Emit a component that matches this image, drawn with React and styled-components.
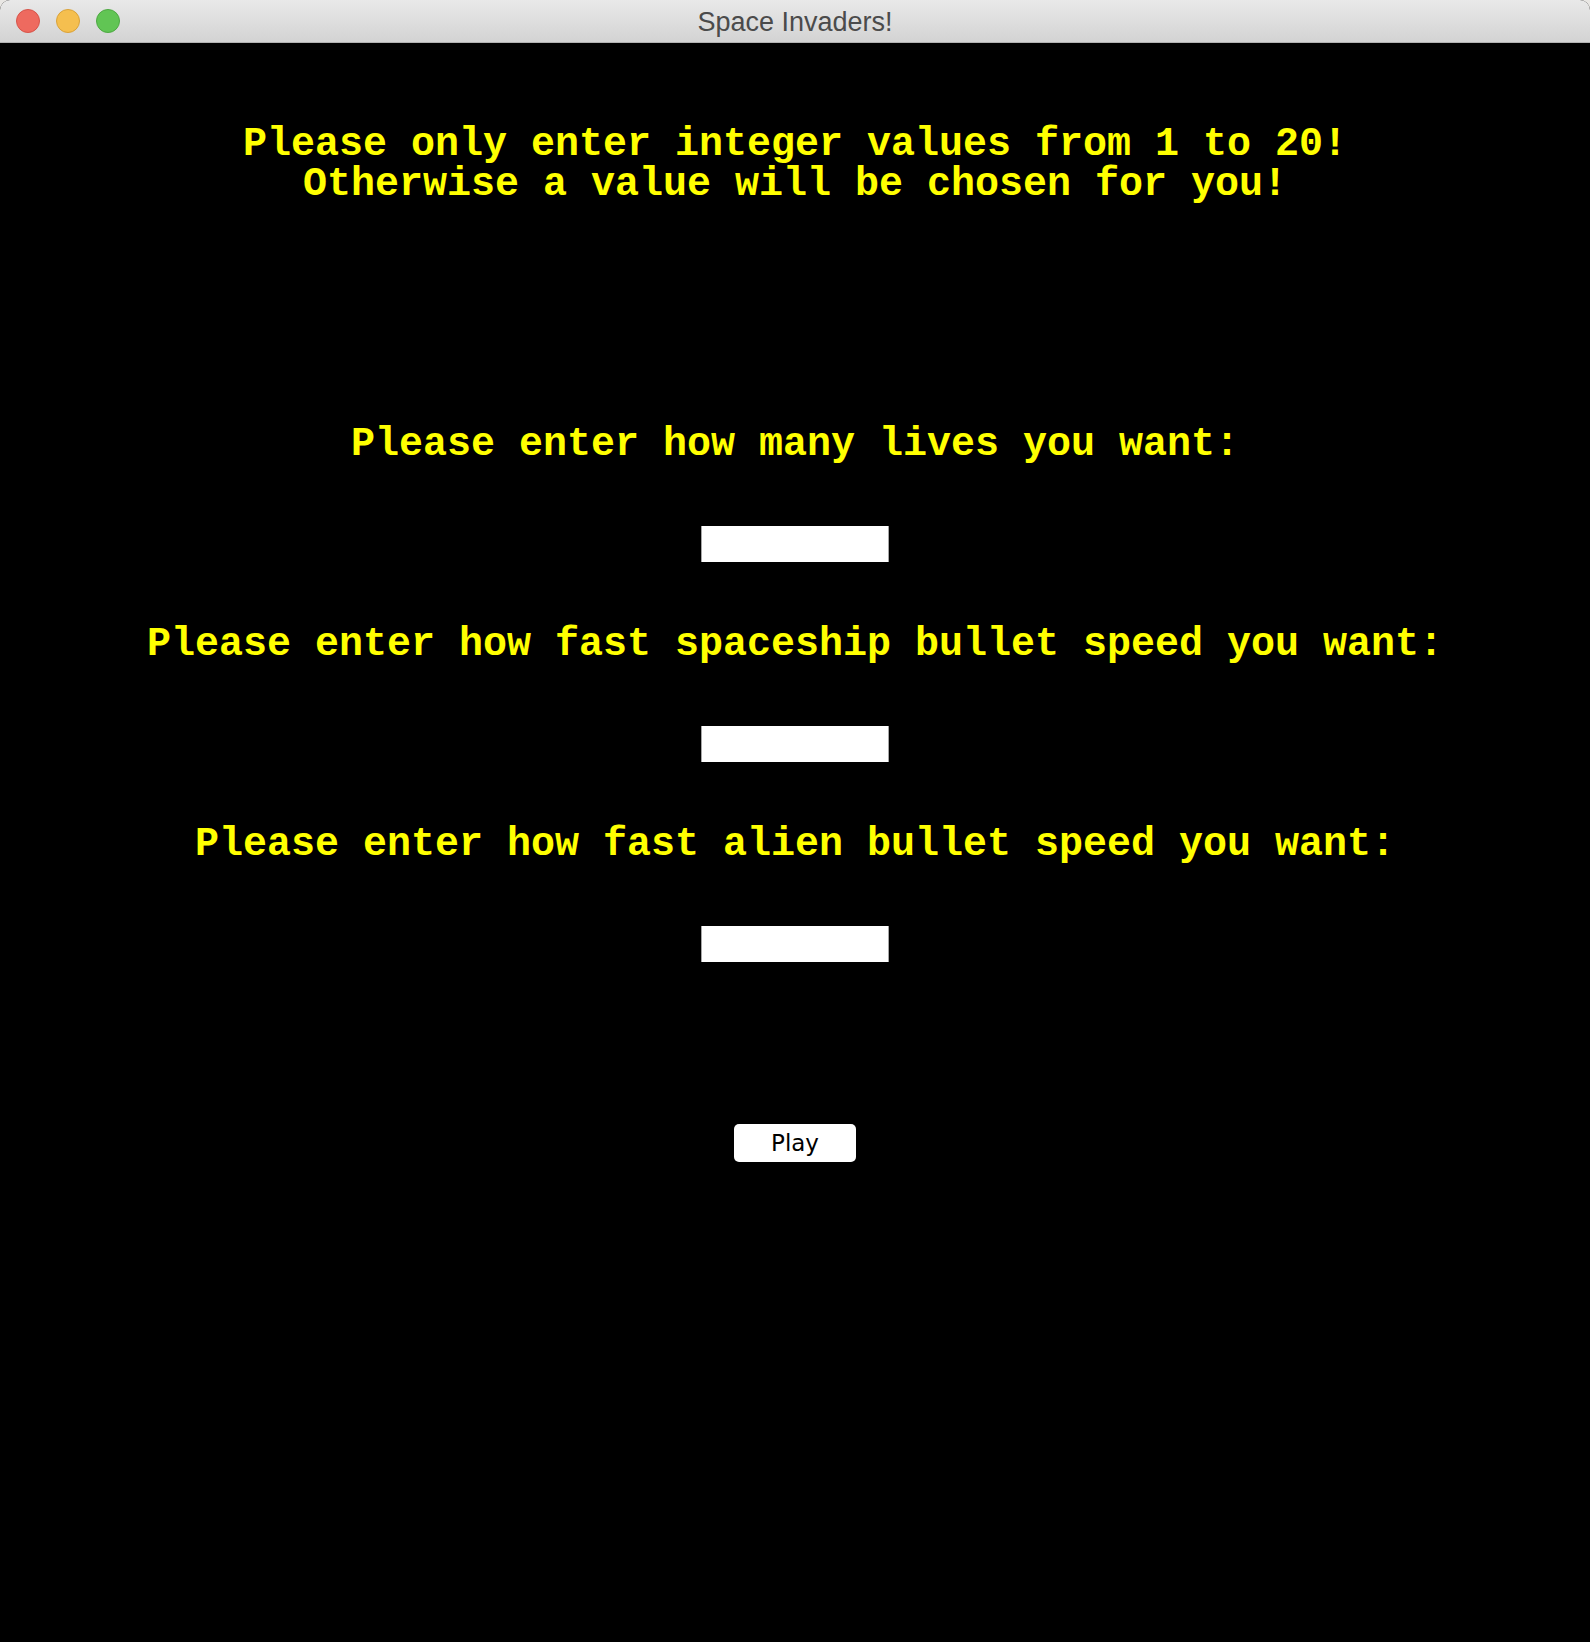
import { useState } from 'react';
import styled, { createGlobalStyle } from "styled-components"

const GlobalStyle = createGlobalStyle`
  html, body {
    margin: 0;
    padding: 0;
    background-color: #e9e7e4;
  }
  * {
    box-sizing: border-box;
  }
`

const fields = [
  {id: "lives", label: "Please enter how many lives you want:"},
  {id: "shipBullet", label: "Please enter how fast spaceship bullet speed you want:"},
  {id: "alienBullet", label: "Please enter how fast alien bullet speed you want:"},
]

const lights = ["#ee6a5f", "#f5bf4f", "#61c554"]
const lightBorders = ["#d6544a", "#d9a23a", "#4ea843"]

const App = () => {
  const [values, setValues] = useState({lives: "", shipBullet: "", alienBullet: ""})

  const handleChange = (id, value) => {
    setValues({...values, [id]: value})
  }

  return (
    <>
      <GlobalStyle />
      <Window>
        <TitleBar>
          <Lights>
            {lights.map((color, index) => (
              <Light key={index} color={color} edge={lightBorders[index]} />
            ))}
          </Lights>
          <WindowTitle>Space Invaders!</WindowTitle>
        </TitleBar>
        <Content>
          <Heading>
            <Line>Please only enter integer values from 1 to 20!</Line>
            <Line>Otherwise a value will be chosen for you!</Line>
          </Heading>
          <Form>
            {fields.map((field) => (
              <Field key={field.id}>
                <Label htmlFor={field.id}>{field.label}</Label>
                <Input
                  id={field.id}
                  type="text"
                  value={values[field.id]}
                  onChange={(e) => handleChange(field.id, e.target.value)}
                />
              </Field>
            ))}
          </Form>
          <PlayButton>Play</PlayButton>
        </Content>
      </Window>
    </>
  )
}

const Window = styled.div`
  width: 1590px;
  height: 1642px;
  display: flex;
  flex-direction: column;
  background-color: black;
  border-radius: 10px 10px 0 0;
  overflow: hidden;
`

const TitleBar = styled.div`
  height: 43px;
  flex-shrink: 0;
  position: relative;
  display: flex;
  align-items: center;
  justify-content: center;
  background: linear-gradient(#e9e9e9, #d3d3d3);
  border-bottom: 1px solid #b3b3b3;
`

const Lights = styled.div`
  position: absolute;
  left: 16px;
  top: 9px;
  display: flex;
  gap: 16px;
`

const Light = styled.span`
  width: 24px;
  height: 24px;
  border-radius: 50%;
  background-color: ${props => props.color};
  border: 1px solid ${props => props.edge};
`

const WindowTitle = styled.div`
  font-family: "Liberation Sans", Arial, sans-serif;
  font-size: 27px;
  color: #4b4b4b;
  margin-top: 3px;
`

const Content = styled.div`
  display: flex;
  flex-direction: column;
  align-items: center;
  padding-top: 79px;
  font-family: "Liberation Mono", "Courier New", monospace;
  font-weight: bold;
  color: #ffff00;
`

const Heading = styled.div`
  display: flex;
  flex-direction: column;
  align-items: center;
  padding-top: 3px;
  font-size: 40px;
  line-height: 40px;
`

const Line = styled.span`
  white-space: pre;
`

const Form = styled.div`
  margin-top: 217px;
  display: flex;
  flex-direction: column;
  align-items: center;
  gap: 60px;
`

const Field = styled.div`
  display: flex;
  flex-direction: column;
  align-items: center;
  gap: 61px;
`

const Label = styled.label`
  padding-top: 3px;
  font-size: 40px;
  line-height: 40px;
  white-space: pre;
`

const Input = styled.input`
  width: 188px;
  height: 36px;
  margin: 0;
  padding: 0 4px;
  border: none;
  border-left: 1px solid #a6a6a6;
  border-right: 1px solid #a6a6a6;
  background-color: white;
  font-family: "DejaVu Sans", sans-serif;
  font-size: 18px;
  outline: none;
`

const PlayButton = styled.button`
  margin-top: 162px;
  width: 122px;
  height: 38px;
  padding: 0 0 1px;
  border: none;
  border-radius: 5px;
  background-color: white;
  color: black;
  font-family: "DejaVu Sans", "Lucida Grande", sans-serif;
  font-size: 23px;
  cursor: pointer;
`

export default App;
